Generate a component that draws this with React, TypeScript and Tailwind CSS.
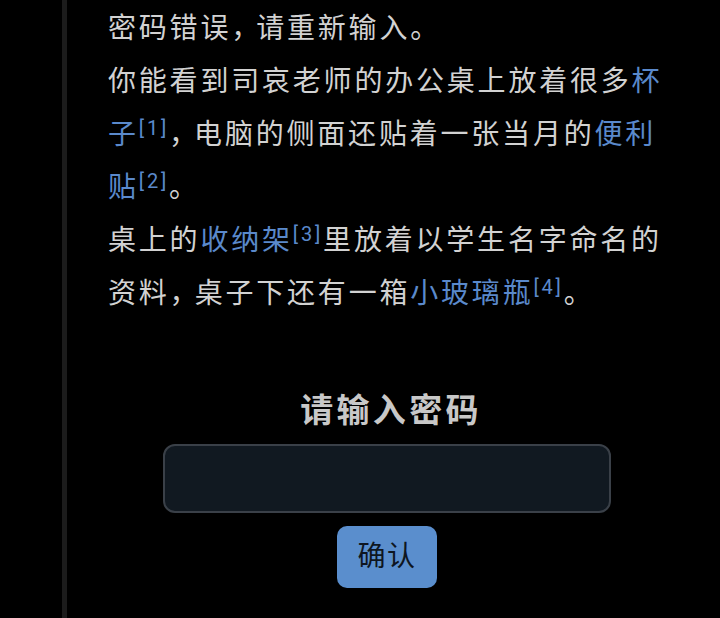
import React from "react";

const Link = ({ children }: { children: React.ReactNode }) => (
  <span className="text-[#5a89cb]">{children}</span>
);

const Note = ({ n }: { n: number }) => (
  <sup className="text-[20px] text-[#5a89cb] top-[-0.45em]">[{n}]</sup>
);

// Full-width comma set a little tighter than the ideographs around it
const Comma = () => <span className="tracking-[-3px]">，</span>;

export default function App() {
  return (
    <div className="min-h-screen bg-black flex font-[family-name:Roboto,'Noto_Sans_CJK_SC',sans-serif]">
      <div className="w-[62px] shrink-0" />
      <main className="flex-1 border-l-[5px] border-[#1c1c1c] pl-[41px] pr-[54px] pt-[2px]">
        <div className="text-[28px] leading-[53px] tracking-[0.1em] text-[#d2d2d2]">
          <p>
            密码错误<Comma />请重新输入。
          </p>
          <p>
            你能看到司哀老师的办公桌上放着很多<Link>杯子</Link>
            <Note n={1} />
            <Comma />电脑的侧面还贴着一张当月的<Link>便利贴</Link>
            <Note n={2} />。
          </p>
          <p>
            桌上的<Link>收纳架</Link>
            <Note n={3} />里放着以学生名字命名的资料<Comma />桌子下还有一箱<Link>小玻璃瓶</Link>
            <Note n={4} />。
          </p>
        </div>

        <section className="mt-[71px] flex flex-col items-center">
          <h2 className="text-[33px] leading-[40px] font-bold tracking-[0.1em] text-[#c8c8c8] pl-[8px]">
            请输入密码
          </h2>
          <input
            type="password"
            className="mt-[13px] w-[448px] h-[69px] rounded-[12px] border-2 border-[#3a4048] bg-[#111921] outline-none"
          />
          <button className="mt-[13px] w-[100px] h-[62px] rounded-[10px] bg-[#5a8ecd] text-[28px] tracking-[0.05em] text-[#0e1621]">
            确认
          </button>
        </section>
      </main>
    </div>
  );
}
